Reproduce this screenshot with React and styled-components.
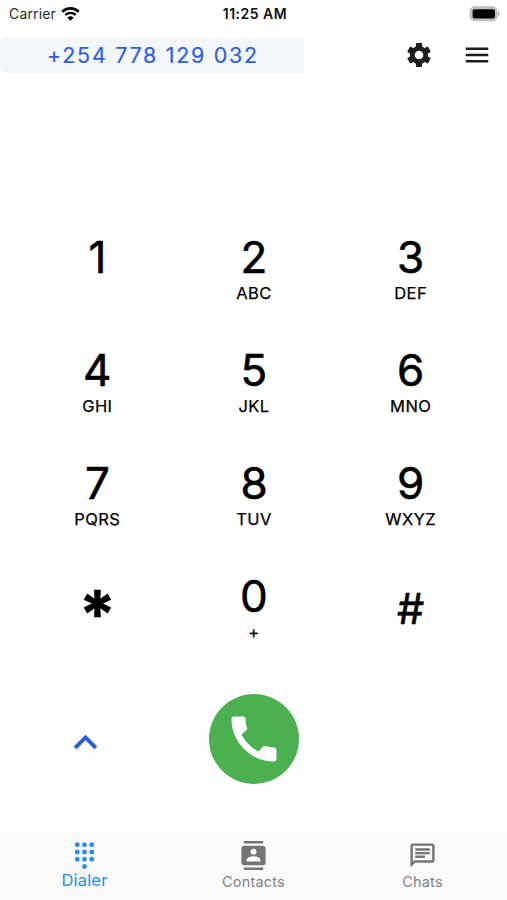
import React, { useState } from 'react';
import styled, { createGlobalStyle } from 'styled-components';
import {
  MdDialpad,
  MdKeyboardArrowUp,
  MdMenu,
  MdOutlineChat,
} from 'react-icons/md';

const WifiIcon = () => (
  <svg width="19" height="14" viewBox="0 0 19 14" fill="none">
    <path d="M1.3 4.7a11.8 11.8 0 0 1 16.4 0" stroke="#000" strokeWidth="2.6" />
    <path d="M4.3 8a7.5 7.5 0 0 1 10.4 0" stroke="#000" strokeWidth="2.4" />
    <path d="M9.5 13.8 6.4 10.7a4.5 4.5 0 0 1 6.2 0z" fill="#000" />
  </svg>
);

const BatteryIcon = () => (
  <svg width="32" height="16" viewBox="0 0 32 16">
    <rect x="1" y="0.8" width="27" height="14" rx="4.5" fill="#c4c4c4" stroke="#a9a9a9" strokeWidth="0.8" />
    <rect x="3.6" y="3.2" width="22.4" height="9.2" rx="1.8" fill="#000" />
    <path d="M29 5.6c2 .8 2 3.6 0 4.4z" fill="#a8a8a8" />
  </svg>
);

const GearIcon = () => (
  <svg width="24" height="24" viewBox="-12 -12 24 24">
    {[0, 60, 120].map((angle) => (
      <rect
        key={angle}
        x="-3.1"
        y="-11.9"
        width="6.2"
        height="23.8"
        rx="0.8"
        transform={`rotate(${angle})`}
        fill="currentColor"
      />
    ))}
    <circle r="6.7" fill="#fefefe" stroke="currentColor" strokeWidth="4.8" />
  </svg>
);

const PhoneIcon = () => (
  <svg width="60" height="60" viewBox="0 0 24 24" fill="currentColor">
    <path d="M20.01 15.38c-1.23 0-2.42-.2-3.53-.56-.35-.12-.74-.03-1.01.24l-1.57 1.97c-2.83-1.35-5.48-3.9-6.89-6.83l1.95-1.66c.27-.28.35-.67.24-1.02-.37-1.11-.56-2.3-.56-3.53 0-.54-.45-.99-.99-.99H4.19C3.65 3 3 3.24 3 3.99 3 13.28 10.73 21 20.01 21c.71 0 .99-.63.99-1.18v-3.45c0-.54-.45-.99-.99-.99z" />
  </svg>
);

const ContactsIcon = () => (
  <svg width="29" height="29" viewBox="0 0 24 24" fill="currentColor">
    <path d="M20 0H4v2h16V0zM4 24h16v-2H4v2zM20 4H4c-1.1 0-2 .9-2 2v12c0 1.1.9 2 2 2h16c1.1 0 2-.9 2-2V6c0-1.1-.9-2-2-2zm-8 2.4c1.4 0 2.5 1.1 2.5 2.5s-1.1 2.5-2.5 2.5-2.5-1.1-2.5-2.5 1.1-2.5 2.5-2.5zM17.8 17H6.2v-1.2c0-1.9 3.6-3.1 5.8-3.1s5.8 1.2 5.8 3.1V17z" />
  </svg>
);

const KEYS = [
  { digit: '1', letters: '' },
  { digit: '2', letters: 'ABC' },
  { digit: '3', letters: 'DEF' },
  { digit: '4', letters: 'GHI' },
  { digit: '5', letters: 'JKL' },
  { digit: '6', letters: 'MNO' },
  { digit: '7', letters: 'PQRS' },
  { digit: '8', letters: 'TUV' },
  { digit: '9', letters: 'WXYZ' },
  { digit: '*', symbol: 'star' },
  { digit: '0', letters: '+' },
  { digit: '#', symbol: 'hash' },
];

const TABS = [
  { name: 'Dialer', icon: MdDialpad },
  { name: 'Contacts', icon: ContactsIcon },
  { name: 'Chats', icon: MdOutlineChat },
];

const App = () => {
  const [activeTab, setActiveTab] = useState('Dialer');

  return (
    <>
      <GlobalStyle />
      <Screen>
        <StatusBar>
          <Carrier>
            Carrier
            <WifiIcon />
          </Carrier>
          <Clock>11:25 AM</Clock>
          <BatterySlot>
            <BatteryIcon />
          </BatterySlot>
        </StatusBar>

        <Header>
          <NumberChip>+254 778 129 032</NumberChip>
          <IconButton aria-label="Settings">
            <GearIcon />
          </IconButton>
          <IconButton aria-label="Menu">
            <MdMenu size={30} />
          </IconButton>
        </Header>

        <Keypad>
          {KEYS.map((key) => (
            <Key key={key.digit}>
              {key.symbol ? (
                <KeySymbol $kind={key.symbol}>{key.digit}</KeySymbol>
              ) : (
                <>
                  <Digit>{key.digit}</Digit>
                  <Letters>{key.letters}</Letters>
                </>
              )}
            </Key>
          ))}
        </Keypad>

        <CallRow>
          <ExpandButton aria-label="Expand">
            <MdKeyboardArrowUp size={47} />
          </ExpandButton>
          <CallButton aria-label="Call">
            <PhoneIcon />
          </CallButton>
        </CallRow>

        <TabBar>
          {TABS.map(({ name, icon: Icon }) => (
            <Tab
              key={name}
              $active={name === activeTab}
              onClick={() => setActiveTab(name)}
            >
              <Icon size={29} />
              <TabLabel $active={name === activeTab}>{name}</TabLabel>
            </Tab>
          ))}
        </TabBar>
      </Screen>
    </>
  );
};

const GlobalStyle = createGlobalStyle`
  * {
    box-sizing: border-box;
  }
  body {
    margin: 0;
    background: #fefefe;
    font-family: Inter, 'Liberation Sans', sans-serif;
  }
  button {
    font-family: inherit;
    border: none;
    padding: 0;
    background: none;
    cursor: pointer;
  }
  svg {
    display: block;
    flex-shrink: 0;
  }
`;

const Screen = styled.div`
  display: flex;
  flex-direction: column;
  width: 507px;
  height: 900px;
  background: #fefefe;
  overflow: hidden;
`;

const StatusBar = styled.div`
  display: grid;
  grid-template-columns: 1fr auto 1fr;
  align-items: center;
  height: 27px;
  padding: 0 6px 0 9px;
  font-size: 14px;
  color: #111;
`;

const Carrier = styled.div`
  display: flex;
  align-items: center;
  gap: 5px;
  letter-spacing: 0.15px;
  color: #2a2a2a;
`;

const Clock = styled.div`
  font-weight: 600;
  letter-spacing: 0.5px;
`;

const BatterySlot = styled.div`
  display: flex;
  justify-content: flex-end;
`;

const Header = styled.div`
  display: flex;
  align-items: center;
  height: 36px;
  margin-top: 10px;
`;

const NumberChip = styled.div`
  width: 304px;
  height: 36px;
  margin-right: 86px;
  padding-left: 2px;
  border-radius: 6px 0 0 6px;
  background: #f3f7fa;
  color: #2f5fe0;
  font-size: 21.5px;
  line-height: 36px;
  letter-spacing: 1.7px;
  text-align: center;
  -webkit-text-stroke: 0.2px currentColor;
`;

const IconButton = styled.button`
  display: flex;
  align-items: center;
  justify-content: center;
  width: 58px;
  height: 36px;
  color: #1c1d1f;
`;

const Keypad = styled.div`
  display: grid;
  grid-template-columns: repeat(3, 1fr);
  grid-auto-rows: 113px;
  margin-top: 157px;
  padding: 0 18px 0 19px;
`;

const Key = styled.button`
  display: flex;
  flex-direction: column;
  align-items: center;
  color: #000;
`;

const Digit = styled.span`
  font-size: 44px;
  font-weight: 400;
  line-height: 54px;
  -webkit-text-stroke: 0.6px #000;
`;

const Letters = styled.span`
  font-size: 16.5px;
  font-weight: 400;
  line-height: 18px;
  letter-spacing: 0.4px;
  -webkit-text-stroke: 0.25px #000;
`;

const KeySymbol = styled.span`
  padding-top: ${({ $kind }) => ($kind === 'star' ? '18px' : '12px')};
  font-size: ${({ $kind }) => ($kind === 'star' ? '66px' : '43px')};
  font-weight: ${({ $kind }) => ($kind === 'star' ? 700 : 400)};
  line-height: 54px;
  -webkit-text-stroke: 0.6px #000;
`;

const CallRow = styled.div`
  display: grid;
  grid-template-columns: 171px 166px 1fr;
  align-items: center;
  justify-items: center;
  height: 90px;
  margin-top: 12px;
`;

const ExpandButton = styled.button`
  padding-top: 7px;
  color: #2b5be3;
`;

const CallButton = styled.button`
  display: flex;
  align-items: center;
  justify-content: center;
  width: 90px;
  height: 90px;
  border-radius: 50%;
  background: #4caf50;
  color: #fff;
`;

const TabBar = styled.nav`
  display: grid;
  grid-template-columns: repeat(3, 1fr);
  height: 70px;
  margin-top: auto;
  background: #fafafa;
`;

const Tab = styled.button`
  display: flex;
  flex-direction: column;
  align-items: center;
  padding-top: 11px;
  color: ${({ $active }) => ($active ? '#2290ea' : '#757575')};
`;

const TabLabel = styled.span`
  padding-top: ${({ $active }) => ($active ? '0' : '1px')};
  font-size: ${({ $active }) => ($active ? '16.5px' : '14.5px')};
  line-height: ${({ $active }) => ($active ? '21px' : '22px')};
  letter-spacing: 0.2px;
  color: ${({ $active }) => ($active ? '#2290ea' : '#828282')};
`;

export default App;
